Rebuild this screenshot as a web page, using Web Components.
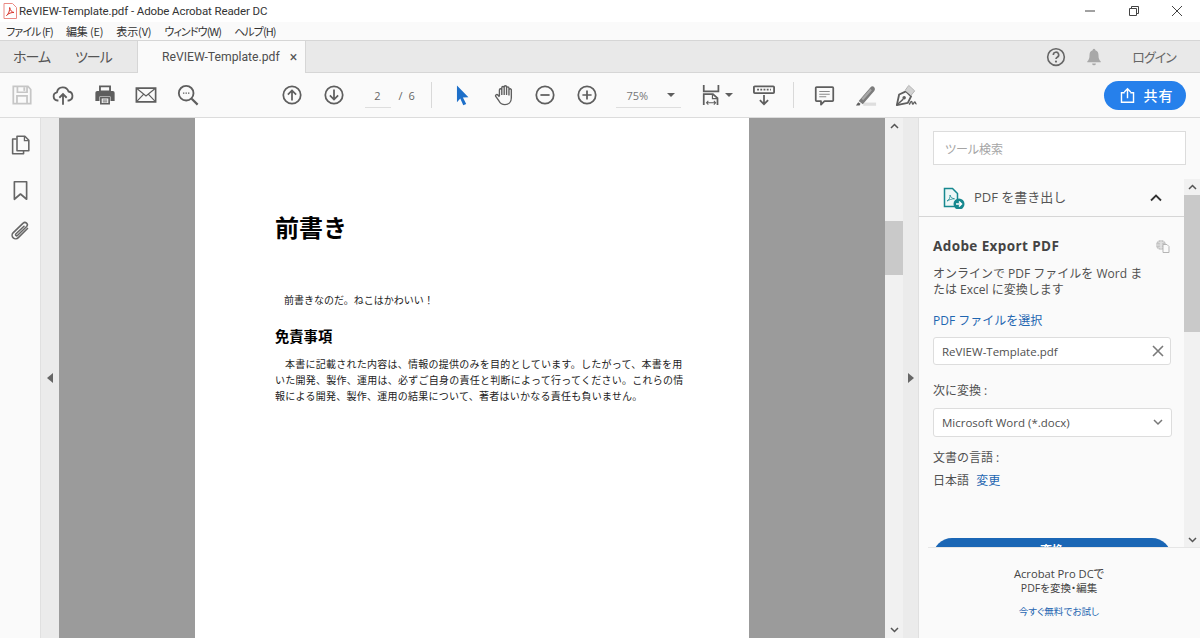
<!DOCTYPE html>
<html lang="ja">
<head>
<meta charset="utf-8">
<title>ReVIEW-Template.pdf</title>
<style>
  html, body { margin: 0; height: 100%; overflow: hidden; background: #fff; }
  body { font-family: "Open Sans", "Noto Sans CJK JP", sans-serif; color: #4b4b4b; }
</style>
</head>
<body>
<acro-app>
  <title-bar slot="top">ReVIEW-Template.pdf - Adobe Acrobat Reader DC</title-bar>
  <menu-bar slot="top"></menu-bar>
  <tab-bar slot="top"></tab-bar>
  <tool-bar slot="top"></tool-bar>
  <left-rail slot="main"></left-rail>
  <doc-view slot="main"></doc-view>
  <tools-panel slot="main"></tools-panel>
</acro-app>

<script>
// アイコン定義 (viewBox 0 0 24 24)
const ICONS = {
  save: '<path d="M2.500 2.500h16l3 3.500v15.500h-19z M7 2.500v6.500h10.500V2.500 M6.500 21.500v-8.500h11v8.500" fill="none" stroke="currentColor" stroke-width="1.900"/><path d="M13.500 3.500h2v4h-2z" fill="currentColor"/>',
  upload: '<path d="M7 18H6a4.5 4.5 0 0 1-.6-8.900A6.500 6.500 0 0 1 18 8.200a5 5 0 0 1 .5 9.800H17" fill="none" stroke="currentColor" stroke-width="2"/><path d="M12 22.500V11.500M8 15l4-4 4 4" fill="none" stroke="currentColor" stroke-width="2"/>',
  print: '<path d="M6.500 8V2.500h11V8z" fill="none" stroke="currentColor" stroke-width="2"/><path d="M1.500 9.500a2 2 0 0 1 2-2h17a2 2 0 0 1 2 2v9h-4.500v-5h-12v5H1.500z" fill="currentColor"/><path d="M7.500 15h9v6.500h-9z" fill="none" stroke="currentColor" stroke-width="1.800"/><path d="M9.500 17.500h5M9.500 19.500h5" stroke="currentColor" stroke-width="1"/>',
  mail: '<path d="M1.500 4.500h21v15h-21z" fill="none" stroke="currentColor" stroke-width="1.800"/><path d="M2 5l10 8 10-8M2 19l7.500-8M22 19l-7.500-8" fill="none" stroke="currentColor" stroke-width="1.300"/>',
  search: '<circle cx="10" cy="10" r="8" fill="none" stroke="currentColor" stroke-width="2"/><path d="M16 16l6.500 6.500" stroke="currentColor" stroke-width="2.400"/><path d="M6.500 10h1.500M9.300 10h1.500M12 10h1.500" stroke="currentColor" stroke-width="1.400"/>',
  up: '<circle cx="12" cy="12" r="9.500" fill="none" stroke="currentColor" stroke-width="1.900"/><path d="M12 18V7M7.500 11.500L12 7l4.500 4.500" fill="none" stroke="currentColor" stroke-width="1.900"/>',
  down: '<circle cx="12" cy="12" r="9.500" fill="none" stroke="currentColor" stroke-width="1.900"/><path d="M12 6v11M7.500 12.500L12 17l4.500-4.500" fill="none" stroke="currentColor" stroke-width="1.900"/>',
  cursor: '<path d="M6.500 1.500L19 14.500l-6 .2 3.600 7-3.200 1.500-3.300-7.300L6.500 20z" fill="#1d6fc9"/>',
  hand: '<path d="M7 13V6.500a1.300 1.300 0 0 1 2.600 0V4a1.300 1.300 0 0 1 2.600 0v-.8a1.300 1.300 0 0 1 2.600 0V4.500a1.300 1.300 0 0 1 2.600 0V6.500a1.300 1.300 0 0 1 2.600 0V15c0 4.500-3 7.500-7 7.500-3.500 0-5.200-1.500-6.500-4L3 13.500c-.8-1.500 1.200-2.700 2.300-1.500L7 14M9.600 6.500V12M12.200 4v8M14.800 3.500V12M17.400 6v6.500" fill="none" stroke="currentColor" stroke-width="1.500" stroke-linejoin="round"/>',
  minus: '<circle cx="12" cy="12" r="9.500" fill="none" stroke="currentColor" stroke-width="1.900"/><path d="M7 12h10" stroke="currentColor" stroke-width="1.900"/>',
  plus: '<circle cx="12" cy="12" r="9.500" fill="none" stroke="currentColor" stroke-width="1.900"/><path d="M7 12h10M12 7v10" stroke="currentColor" stroke-width="1.900"/>',
  fit: '<path d="M3 1v7h16V1" fill="none" stroke="currentColor" stroke-width="1.900"/><path d="M3 23V11h10l5 4.500V23" fill="none" stroke="currentColor" stroke-width="1.900"/><path d="M12.500 11v5h5.500" fill="none" stroke="currentColor" stroke-width="1.300"/><path d="M6 20.500h10M8 18.500l-2 2 2 2M14 18.500l2 2-2 2" fill="none" stroke="currentColor" stroke-width="1.100"/>',
  read: '<path d="M2 2.500h20a1 1 0 0 1 1 1V9a1 1 0 0 1-1 1H2a1 1 0 0 1-1-1V3.500a1 1 0 0 1 1-1z" fill="none" stroke="currentColor" stroke-width="2"/><path d="M4.500 6.200h15" stroke="currentColor" stroke-width="2" stroke-dasharray="2 1.500"/><path d="M12 12v10M7.500 17.500L12 22l4.500-4.500" fill="none" stroke="currentColor" stroke-width="1.900"/>',
  comment: '<path d="M3 2.500h18a1 1 0 0 1 1 1v14a1 1 0 0 1-1 1H12l-4 4v-4H3a1 1 0 0 1-1-1v-14a1 1 0 0 1 1-1z" fill="none" stroke="currentColor" stroke-width="2" stroke-linejoin="round"/><path d="M6 7.500h12M6 10.500h12M6 13.500h8" stroke="#8a8a8a" stroke-width="1.200"/>',
  highlight: '<path d="M9 22h14" stroke="#dedede" stroke-width="3.500"/><path d="M1 23.500l2.500-3.500 2.500 1.500-1 2z" fill="currentColor"/><path d="M4 18.500L17 3.500c1.200-1.300 3-1.200 4 0s1 2.800 0 4L8.500 22z" fill="#7c7c7c"/><path d="M8 17L17.500 6" stroke="#a8a8a8" stroke-width="2.400"/>',
  sign: '<path d="M2 23l2.500-11.500 7.500-3.500 5.500 5.500-3.500 7z" fill="none" stroke="currentColor" stroke-width="2" stroke-linejoin="round"/><path d="M2 23l7-6.500" stroke="currentColor" stroke-width="1.500"/><circle cx="10" cy="15" r="1.900" fill="currentColor"/><path d="M11 7l4-5.500 6.500 6-4 5" fill="#d2d2d2" stroke="#b0b0b0" stroke-width="1"/><path d="M15.500 22.500c1-1.500 1.500-3.500 2.500-3.500s.5 3 1.500 3 1-2.500 2-2.500.5 2.500 2 2" fill="none" stroke="currentColor" stroke-width="1.500"/>',
  pages: '<path d="M7.500 4.500H3v17h12.500V18" fill="none" stroke="currentColor" stroke-width="1.800" stroke-linejoin="round"/><path d="M8 1.500h9l4.500 4.500v12H8z" fill="none" stroke="currentColor" stroke-width="1.800" stroke-linejoin="round"/><path d="M16.500 1.500v5h5" fill="none" stroke="currentColor" stroke-width="1.500"/>',
  bookmark: '<path d="M5 2h14v20l-7-6-7 6z" fill="none" stroke="currentColor" stroke-width="1.900" stroke-linejoin="round"/>',
  clip: '<path d="M20 8.500L9.500 19a4 4 0 0 1-6-5.500L15 2.500a2.700 2.700 0 0 1 4 3.800L8.500 16.500a1.200 1.200 0 0 1-1.800-1.700L16 6" fill="none" stroke="currentColor" stroke-width="1.800" stroke-linecap="round"/>',
  help: '<circle cx="12" cy="12" r="10" fill="none" stroke="currentColor" stroke-width="1.900"/><path d="M8.800 9.500a3.200 3.200 0 1 1 4.700 2.800c-1 .6-1.500 1.100-1.500 2.200" fill="none" stroke="currentColor" stroke-width="2"/><circle cx="12" cy="17.500" r="1.300" fill="currentColor"/>',
  bell: '<path d="M12 1a1.800 1.800 0 0 1 1.800 2c3 .8 4.200 3.300 4.200 6.500 0 4 .7 6 3 8.500v1H3v-1c2.300-2.500 3-4.500 3-8.500 0-3.200 1.200-5.700 4.200-6.500A1.800 1.800 0 0 1 12 1zM9.500 20.500h5a2.500 2.500 0 0 1-5 0z" fill="currentColor"/>',
  share: '<path d="M8 8H3.500v13.500h17V8H16" fill="none" stroke="currentColor" stroke-width="2"/><path d="M12 16V2.500M7.500 7L12 2.500 16.500 7" fill="none" stroke="currentColor" stroke-width="2"/>'
};

class ToolIcon extends HTMLElement {
  connectedCallback() {
    const size = this.getAttribute('size') || 24;
    const root = this.shadowRoot || this.attachShadow({ mode: 'open' });
    root.innerHTML = `
      <style>
        :host { display: inline-flex; width: ${size}px; height: ${size}px; color: inherit; flex: none; }
        svg { width: 100%; height: 100%; display: block; }
      </style>
      <svg viewBox="0 0 24 24">${ICONS[this.getAttribute('name')] || ''}</svg>`;
  }
}

class AcroApp extends HTMLElement {
  constructor() {
    super();
    this.attachShadow({ mode: 'open' });
    this.shadowRoot.innerHTML = `
      <style>
        :host { display: flex; flex-direction: column; width: 1200px; height: 638px; overflow: hidden; }
        .top { display: block; flex: none; }
        .main { display: flex; flex: 1; min-height: 0; }
      </style>
      <div class="top"><slot name="top"></slot></div>
      <div class="main"><slot name="main"></slot></div>`;
  }
}

class TitleBar extends HTMLElement {
  constructor() {
    super();
    this.attachShadow({ mode: 'open' });
    this.shadowRoot.innerHTML = `
      <style>
        :host { display: flex; align-items: center; height: 22px; background: #fff; font-size: 11.500px; letter-spacing: -0.100px; color: #333; font-family: Roboto, sans-serif; }
        .logo { width: 14px; height: 16px; margin-left: 3px; margin-right: 2px; }
        .text { flex: 1; white-space: nowrap; }
        .ctl { width: 43.500px; height: 20px; display: flex; align-items: center; justify-content: center; }
        .ctl svg { width: 12px; height: 12px; }
      </style>
      <svg class="logo" viewBox="0 0 14 16">
        <path d="M1 .5h8.500l4 4v11H1z" fill="#fff" stroke="#ea8a84" stroke-width="1"/>
        <path d="M3.500 12.500c2-1 3.500-5.500 3.200-8 .5 3 2 4.500 4.300 5-2.500-.2-5.500.8-7.500 3z" fill="none" stroke="#d8352c" stroke-width="1"/>
      </svg>
      <span class="text"><slot></slot></span>
      <span class="ctl"><svg viewBox="0 0 12 12"><path d="M1 6h10" stroke="#444" stroke-width="1"/></svg></span>
      <span class="ctl"><svg viewBox="0 0 12 12"><path d="M1.500 3.500h7v7h-7zM3.500 3.500v-2h7v7h-2" fill="none" stroke="#444" stroke-width="1"/></svg></span>
      <span class="ctl" style="margin-right:1px"><svg viewBox="0 0 12 12"><path d="M1 1l10 10M11 1L1 11" stroke="#444" stroke-width="1"/></svg></span>`;
  }
}

class MenuBar extends HTMLElement {
  constructor() {
    super();
    this.attachShadow({ mode: 'open' });
    this.shadowRoot.innerHTML = `
      <style>
        :host { display: flex; align-items: center; gap: 13px; height: 18px; padding-left: 6px; background: #fafafa; font-size: 11px; color: #333; font-family: "Noto Sans CJK JP", sans-serif; font-feature-settings: "palt"; }
        span { white-space: nowrap; letter-spacing: -0.150px; }
        .k { letter-spacing: -0.900px; }
      </style>
      <span class="k">ファイル (F)</span><span>編集 (E)</span><span>表示(V)</span><span class="k">ウィンドウ(W)</span><span class="k">ヘルプ(H)</span>`;
  }
}

class TabBar extends HTMLElement {
  constructor() {
    super();
    this.attachShadow({ mode: 'open' });
    this.shadowRoot.innerHTML = `
      <style>
        :host { display: flex; align-items: stretch; height: 31px; background: #e9e9e9; border-top: 1px solid #d6d6d6; border-bottom: 1px solid #d6d6d6; font-family: "Noto Sans CJK JP", sans-serif; color: #555; font-size: 14px; font-feature-settings: "palt"; white-space: nowrap; }
        .home { display: flex; align-items: center; width: 137px; gap: 25px; padding: 0 0 2px 13px; box-sizing: border-box; letter-spacing: -1px; }
        .tab { display: flex; align-items: center; width: 169px; box-sizing: border-box; padding: 0 0 0 24px; background: #fafafa; margin-bottom: -1px; border-right: 1px solid #d6d6d6; border-left: 1px solid #d6d6d6; font-size: 12.200px; font-family: Roboto, sans-serif; color: #4f4f4f; }
        .close { margin-left: 10px; font-size: 14px; color: #555; }
        .right { margin-left: auto; display: flex; align-items: center; color: #666; }
        .right tool-icon.help { margin-right: 19px; }
        .right tool-icon.bell { color: #a8a8a8; margin-right: 29px; }
        .login { margin-right: 24px; font-size: 13px; letter-spacing: -0.900px; padding-bottom: 1px; }
      </style>
      <div class="home"><span>ホーム</span><span>ツール</span></div>
      <div class="tab"><span>ReVIEW-Template.pdf</span><span class="close">×</span></div>
      <div class="right">
        <tool-icon class="help" name="help" size="20"></tool-icon>
        <tool-icon class="bell" name="bell" size="18"></tool-icon>
        <span class="login">ログイン</span>
      </div>`;
  }
}

class ToolBar extends HTMLElement {
  constructor() {
    super();
    this.attachShadow({ mode: 'open' });
    const btn = (name, size) => `<span class="btn"><tool-icon name="${name}" size="${size || 22}"></tool-icon></span>`;
    this.shadowRoot.innerHTML = `
      <style>
        :host { display: flex; align-items: center; height: 44px; background: #fafafa; border-bottom: 1px solid #dcdcdc; color: #5e5e5e; font-size: 11px; padding-left: 1px; }
        .btn { display: flex; align-items: center; justify-content: center; width: 41.500px; height: 44px; flex: none; }
        .muted { color: #c6c6c6; }
        .page { width: 26px; margin-left: 10px; text-align: center; border-bottom: 1px solid #dedede; padding: 5px 0 4px; color: #666; }
        .total { margin-left: 8px; width: 24px; color: #666; word-spacing: 3px; }
        .sep { width: 1px; height: 26px; background: #d9d9d9; flex: none; }
        .tools { display: flex; margin-left: 10px; margin-right: -1px; }
        .zoom { display: flex; align-items: center; justify-content: space-between; width: 65px; margin-left: 9px; box-sizing: border-box; padding: 5px 6px 4px 11px; border-bottom: 1px solid #dedede; color: #777; margin-right: 20px; }
        .tri { width: 0; height: 0; border-left: 4px solid transparent; border-right: 4px solid transparent; border-top: 4px solid #5e5e5e; }
        .fit { display: flex; align-items: center; gap: 2px; width: 46px; }
        .share { display: flex; align-items: center; justify-content: center; gap: 8px; width: 82px; height: 29px; box-sizing: border-box; padding-left: 2px; border-radius: 15px; background: #2680eb; color: #fff; font-size: 14px; font-weight: 500; font-family: "Noto Sans CJK JP", sans-serif; margin-left: auto; margin-right: 14px; letter-spacing: 1px; }
      </style>
      <span class="btn muted"><tool-icon name="save" size="22"></tool-icon></span>
      ${btn('upload')}${btn('print')}${btn('mail')}${btn('search')}
      <span style="width:63px;flex:none"></span>
      ${btn('up')}${btn('down')}
      <span class="page">2</span><span class="total">/ 6</span>
      <span style="width:8px;flex:none"></span>
      <span class="sep"></span>
      <span class="tools">${btn('cursor')}${btn('hand')}${btn('minus')}${btn('plus')}</span>
      <span class="zoom"><span>75%</span><span class="tri"></span></span>
      <span class="fit"><tool-icon name="fit" size="22"></tool-icon><span class="tri"></span></span>
      <span style="width:6px;flex:none"></span>
      <tool-icon name="read" size="22"></tool-icon>
      <span style="width:18px;flex:none"></span>
      <span class="sep"></span>
      <span style="width:10px;flex:none"></span>
      ${btn('comment', 21)}${btn('highlight')}<span class="btn" style="margin-left:-1px"><tool-icon name="sign" size="22"></tool-icon></span>
      <span class="share"><tool-icon name="share" size="17"></tool-icon><span>共有</span></span>`;
  }
}

class LeftRail extends HTMLElement {
  constructor() {
    super();
    this.attachShadow({ mode: 'open' });
    this.shadowRoot.innerHTML = `
      <style>
        :host { display: flex; flex-direction: column; align-items: center; width: 41px; box-sizing: border-box; padding-top: 17px; background: #fafafa; color: #666; border-right: 1px solid #e0e0e0; flex: none; }
        .mark { margin-top: 24px; }
        .clip { margin-top: 20px; }
      </style>
      <tool-icon name="pages" size="21"></tool-icon>
      <tool-icon class="mark" name="bookmark" size="21"></tool-icon>
      <tool-icon class="clip" name="clip" size="21"></tool-icon>`;
  }
}

class SideStrip extends HTMLElement {
  constructor() {
    super();
    this.attachShadow({ mode: 'open' });
    const dir = this.getAttribute('dir-to');
    this.shadowRoot.innerHTML = `
      <style>
        :host { display: flex; align-items: center; justify-content: center; background: #ebebeb; flex: none; box-sizing: border-box; width: ${this.getAttribute('w') || 18}px; }
        i { display: block; width: 0; height: 0; border-top: 5px solid transparent; border-bottom: 5px solid transparent; ${dir === 'left' ? 'border-right: 6px solid #666;' : 'border-left: 6px solid #666;'} }
      </style>
      <i></i>`;
  }
}

class ScrollTrack extends HTMLElement {
  constructor() {
    super();
    this.attachShadow({ mode: 'open' });
    const top = this.getAttribute('thumb-top');
    const h = this.getAttribute('thumb-height');
    this.shadowRoot.innerHTML = `
      <style>
        :host { display: flex; flex-direction: column; align-items: center; justify-content: space-between; width: 16px; background: #f1f1f1; flex: none; box-sizing: border-box; }
        .thumb { flex: none; width: 100%; height: ${h}px; margin-top: ${top}px; background: #c9c9c9; }
        .end { width: 16px; height: 16px; flex: none; display: flex; align-items: center; justify-content: center; }
        .mid { flex: 1; width: 100%; min-height: 0; }
        svg { width: 9px; height: 6px; }
      </style>
      <span class="end"><svg viewBox="0 0 9 6"><path d="M1 5l3.500-3.500L8 5" fill="none" stroke="#555" stroke-width="1.500"/></svg></span>
      <div class="mid"><div class="thumb"></div></div>
      <span class="end"><svg viewBox="0 0 9 6"><path d="M1 1l3.500 3.500L8 1" fill="none" stroke="#555" stroke-width="1.500"/></svg></span>`;
  }
}

class DocPage extends HTMLElement {
  constructor() {
    super();
    this.attachShadow({ mode: 'open' });
    this.shadowRoot.innerHTML = `
      <style>
        :host { display: block; width: 554px; flex: none; background: #fff; box-sizing: border-box; padding: 93px 65px 0 80px; color: #111; font-family: "Noto Sans CJK JP", sans-serif; overflow: hidden; }
        h1 { margin: 0; font-size: 24px; line-height: 32px; font-weight: 700; color: #000; }
        h2 { margin: 18px 0 0; font-size: 14.300px; line-height: 20px; font-weight: 700; color: #000; }
        .lead { margin-top: 49px; padding-left: 9px; font-size: 10px; line-height: 16px; color: #222; }
        .body { margin-top: 10px; font-size: 10px; line-height: 16px; color: #222; }
        .body div { white-space: nowrap; letter-spacing: 0.250px; }
        .body div:first-child { padding-left: 10px; }
      </style>
      <h1>前書き</h1>
      <div class="lead">前書きなのだ。ねこはかわいい！</div>
      <h2>免責事項</h2>
      <div class="body">
        <div>本書に記載された内容は、情報の提供のみを目的としています。したがって、本書を用</div>
        <div>いた開発、製作、運用は、必ずご自身の責任と判断によって行ってください。これらの情</div>
        <div>報による開発、製作、運用の結果について、著者はいかなる責任も負いません。</div>
      </div>`;
  }
}

class DocView extends HTMLElement {
  constructor() {
    super();
    this.attachShadow({ mode: 'open' });
    this.shadowRoot.innerHTML = `
      <style>
        :host { display: flex; flex: none; width: 877px; min-height: 0; }
        .canvas { flex: 1; display: flex; justify-content: center; background: #9b9b9b; }
        scroll-track { width: 18px; }
      </style>
      <side-strip dir-to="left" w="18"></side-strip>
      <div class="canvas"><doc-page></doc-page></div>
      <scroll-track thumb-top="87" thumb-height="54"></scroll-track>
      <side-strip dir-to="right" w="15"></side-strip>`;
  }
}

class ToolsPanel extends HTMLElement {
  constructor() {
    super();
    this.attachShadow({ mode: 'open' });
    this.shadowRoot.innerHTML = `
      <style>
        :host { display: flex; flex-direction: column; flex: 1; min-width: 0; background: #fafafa; font-family: "Open Sans", "Noto Sans CJK JP", sans-serif; font-size: 12px; color: #505050; border-left: 1px solid #e0e0e0; }
        .search { margin: 13px 14px 14px 14px; height: 34px; box-sizing: border-box; background: #fff; border: 1px solid #dcdcdc; padding: 1px 0 0 11px; display: flex; align-items: center; color: #a5a5a5; font-size: 12px; flex: none; font-feature-settings: "palt"; }
        .scroll { flex: 1; min-height: 0; display: flex; }
        .content { flex: 1; min-width: 0; overflow: hidden; }
        .head { display: flex; align-items: center; height: 37px; box-sizing: content-box; border-bottom: 1px solid #d6d6d6; padding: 0 22px 0 24px; font-size: 13px; color: #555; }
        .head svg.pdf { width: 22px; height: 22px; margin-right: 9px; }
        .head span { flex: 1; padding-bottom: 2px; }
        .body { padding: 20px 13px 0 14px; }
        .name { display: flex; align-items: center; justify-content: space-between; font-size: 13.500px; font-weight: 700; color: #444; letter-spacing: 0.400px; padding-right: 1px; }
        .desc { margin-top: 11px; line-height: 15.500px; }
        .link { color: #1f66b1; }
        .pick { margin-top: 16px; line-height: 16px; }
        .box { display: flex; align-items: center; justify-content: space-between; height: 28px; box-sizing: border-box; background: #fff; border: 1px solid #dddddd; border-radius: 3px; padding: 0 6px 0 8px; margin-top: 8px; font-size: 11.500px; }
        .label { margin-top: 18px; line-height: 16px; }
        .label.b { margin-top: 13px; }
        .select { margin-top: 9px; height: 29px; width: 239px; }
        .lang { margin-top: 7px; line-height: 16px; }
        .lang .link { margin-left: 4px; }
        .go { margin-top: 49px; height: 38px; border-radius: 19px; background: #1a66b5; color: #fff; text-align: center; font-size: 12px; line-height: 26px; font-weight: 700; }
        .promo { flex: none; height: 91px; margin: -1px 0 0 9px; border-top: 1px solid #e6e6e6; box-sizing: border-box; text-align: center; padding: 19px 10px 0 0; font-size: 10.500px; line-height: 14px; color: #444; background: #fafafa; font-feature-settings: "palt"; }
        .promo .big { font-size: 11.200px; }
        .promo .link { margin-top: 10px; display: block; font-size: 9.600px; }
      </style>
      <div class="search">ツール検索</div>
      <div class="scroll">
        <div class="content">
          <div class="head">
            <svg class="pdf" viewBox="0 0 22 22">
              <path d="M1.500 1.500h8l5 5v13h-13z" fill="#eef7f7" stroke="#16888f" stroke-width="1.500"/>
              <path d="M4 14c2-1 3.500-3.500 3-6 .6 2 2 3.500 4.500 3.800-2.500 0-5 .8-7.500 2.200z" fill="none" stroke="#16888f" stroke-width=".8"/>
              <circle cx="16" cy="17" r="5.500" fill="#16888f"/>
              <path d="M13 17h5M16 14.500l2.500 2.500-2.500 2.500" fill="none" stroke="#fff" stroke-width="1.500"/>
            </svg>
            <span>PDF を書き出し</span>
            <svg width="12" height="8" viewBox="0 0 12 8"><path d="M1 6.500l5-5 5 5" fill="none" stroke="#333" stroke-width="1.800"/></svg>
          </div>
          <div class="body">
            <div class="name"><span>Adobe Export PDF</span>
              <svg width="15" height="14" viewBox="0 0 15 14"><circle cx="6" cy="6" r="5" fill="#c4c4c4"/><path d="M1 6h10M6 1v10M3 2.500c2 2 4 2 6 0M3 9.500c2-2 4-2 6 0" fill="none" stroke="#fafafa" stroke-width=".6"/><path d="M8 5.500h4l2 2v6H8z" fill="#fafafa" stroke="#b5b5b5" stroke-width="1"/></svg>
            </div>
            <div class="desc">オンラインで PDF ファイルを Word ま<br>たは Excel に変換します</div>
            <div class="pick link">PDF ファイルを選択</div>
            <div class="box"><span>ReVIEW-Template.pdf</span>
              <svg width="12" height="12" viewBox="0 0 12 12"><path d="M1 1l10 10M11 1L1 11" stroke="#7a7a7a" stroke-width="1.600"/></svg>
            </div>
            <div class="label">次に変換 :</div>
            <div class="box select"><span>Microsoft Word (*.docx)</span>
              <svg width="10" height="7" viewBox="0 0 10 7" style="margin-right:2px"><path d="M1 1l4 4 4-4" fill="none" stroke="#777" stroke-width="1.500"/></svg>
            </div>
            <div class="label b">文書の言語 :</div>
            <div class="lang">日本語<span class="link"> 変更</span></div>
            <div class="go">変換</div>
          </div>
        </div>
        <scroll-track thumb-top="0" thumb-height="137"></scroll-track>
      </div>
      <div class="promo">
        <span class="big">Acrobat Pro DCで</span><br>PDFを変換・編集
        <span class="link">今すぐ無料でお試し</span>
      </div>`;
  }
}

// 定義の順番: 中身から先に
customElements.define('tool-icon', ToolIcon);
customElements.define('scroll-track', ScrollTrack);
customElements.define('side-strip', SideStrip);
customElements.define('doc-page', DocPage);
customElements.define('title-bar', TitleBar);
customElements.define('menu-bar', MenuBar);
customElements.define('tab-bar', TabBar);
customElements.define('tool-bar', ToolBar);
customElements.define('left-rail', LeftRail);
customElements.define('doc-view', DocView);
customElements.define('tools-panel', ToolsPanel);
customElements.define('acro-app', AcroApp);
</script>
</body>
</html>
